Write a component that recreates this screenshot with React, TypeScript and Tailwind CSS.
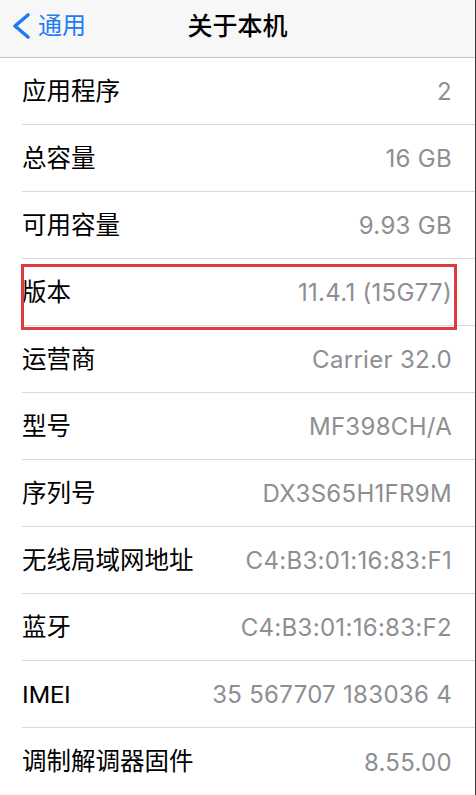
import React from "react";

const rows: [string, string][] = [
  ["应用程序", "2"],
  ["总容量", "16 GB"],
  ["可用容量", "9.93 GB"],
  ["版本", "11.4.1 (15G77)"],
  ["运营商", "Carrier 32.0"],
  ["型号", "MF398CH/A"],
  ["序列号", "DX3S65H1FR9M"],
  ["无线局域网地址", "C4:B3:01:16:83:F1"],
  ["蓝牙", "C4:B3:01:16:83:F2"],
  ["IMEI", "35 567707 183036 4"],
  ["调制解调器固件", "8.55.00"],
];

export default function App() {
  return (
    <div
      className="w-[476px] h-[795px] overflow-hidden bg-white border-r border-[#3a3a3a] flex flex-col"
      style={{ fontFamily: '"Roboto", "Noto Sans CJK SC", sans-serif' }}
    >
      <div className="relative h-[58px] shrink-0 bg-[#f7f7f7] border-b border-[#c6c6c8] flex items-center pb-[5px]">
        <div className="flex items-center pl-[12px] text-[#1d7cf2]">
          <svg width="20" height="28" viewBox="0 0 20 28" className="mr-[6px]">
            <path d="M16 3 L3 14 L16 25" fill="none" stroke="#1d7cf2" strokeWidth="3.6" strokeLinecap="round" strokeLinejoin="round" />
          </svg>
          <span className="text-[24px] leading-none">通用</span>
        </div>
        <div className="absolute left-0 right-0 top-0 bottom-[5px] flex items-center justify-center pointer-events-none">
          <span className="text-[25px] leading-none font-medium text-black">关于本机</span>
        </div>
      </div>
      <div className="flex flex-col">
        {rows.map(([label, value], i) => (
          <div key={label} className="relative pl-[22px] h-[67px] shrink-0">
            <div
              className={`h-full flex items-center justify-between pr-[23px] pt-[2px] ${
                i < rows.length - 1 ? "border-b border-[#d9d9dc]" : ""
              }`}
            >
              <span className="text-[24.5px] leading-none text-black">{label}</span>
              <span
                className="text-[24px] leading-none text-[#8e8e93] tracking-[0.3px]"
                style={{ fontFamily: '"Inter", "Noto Sans CJK SC", sans-serif' }}
              >
                {value}
              </span>
            </div>
            {label === "版本" && (
              <div className="absolute left-[21px] top-[5px] w-[436px] h-[66px] border-[3px] border-[#e0393e] pointer-events-none" />
            )}
          </div>
        ))}
      </div>
    </div>
  );
}
